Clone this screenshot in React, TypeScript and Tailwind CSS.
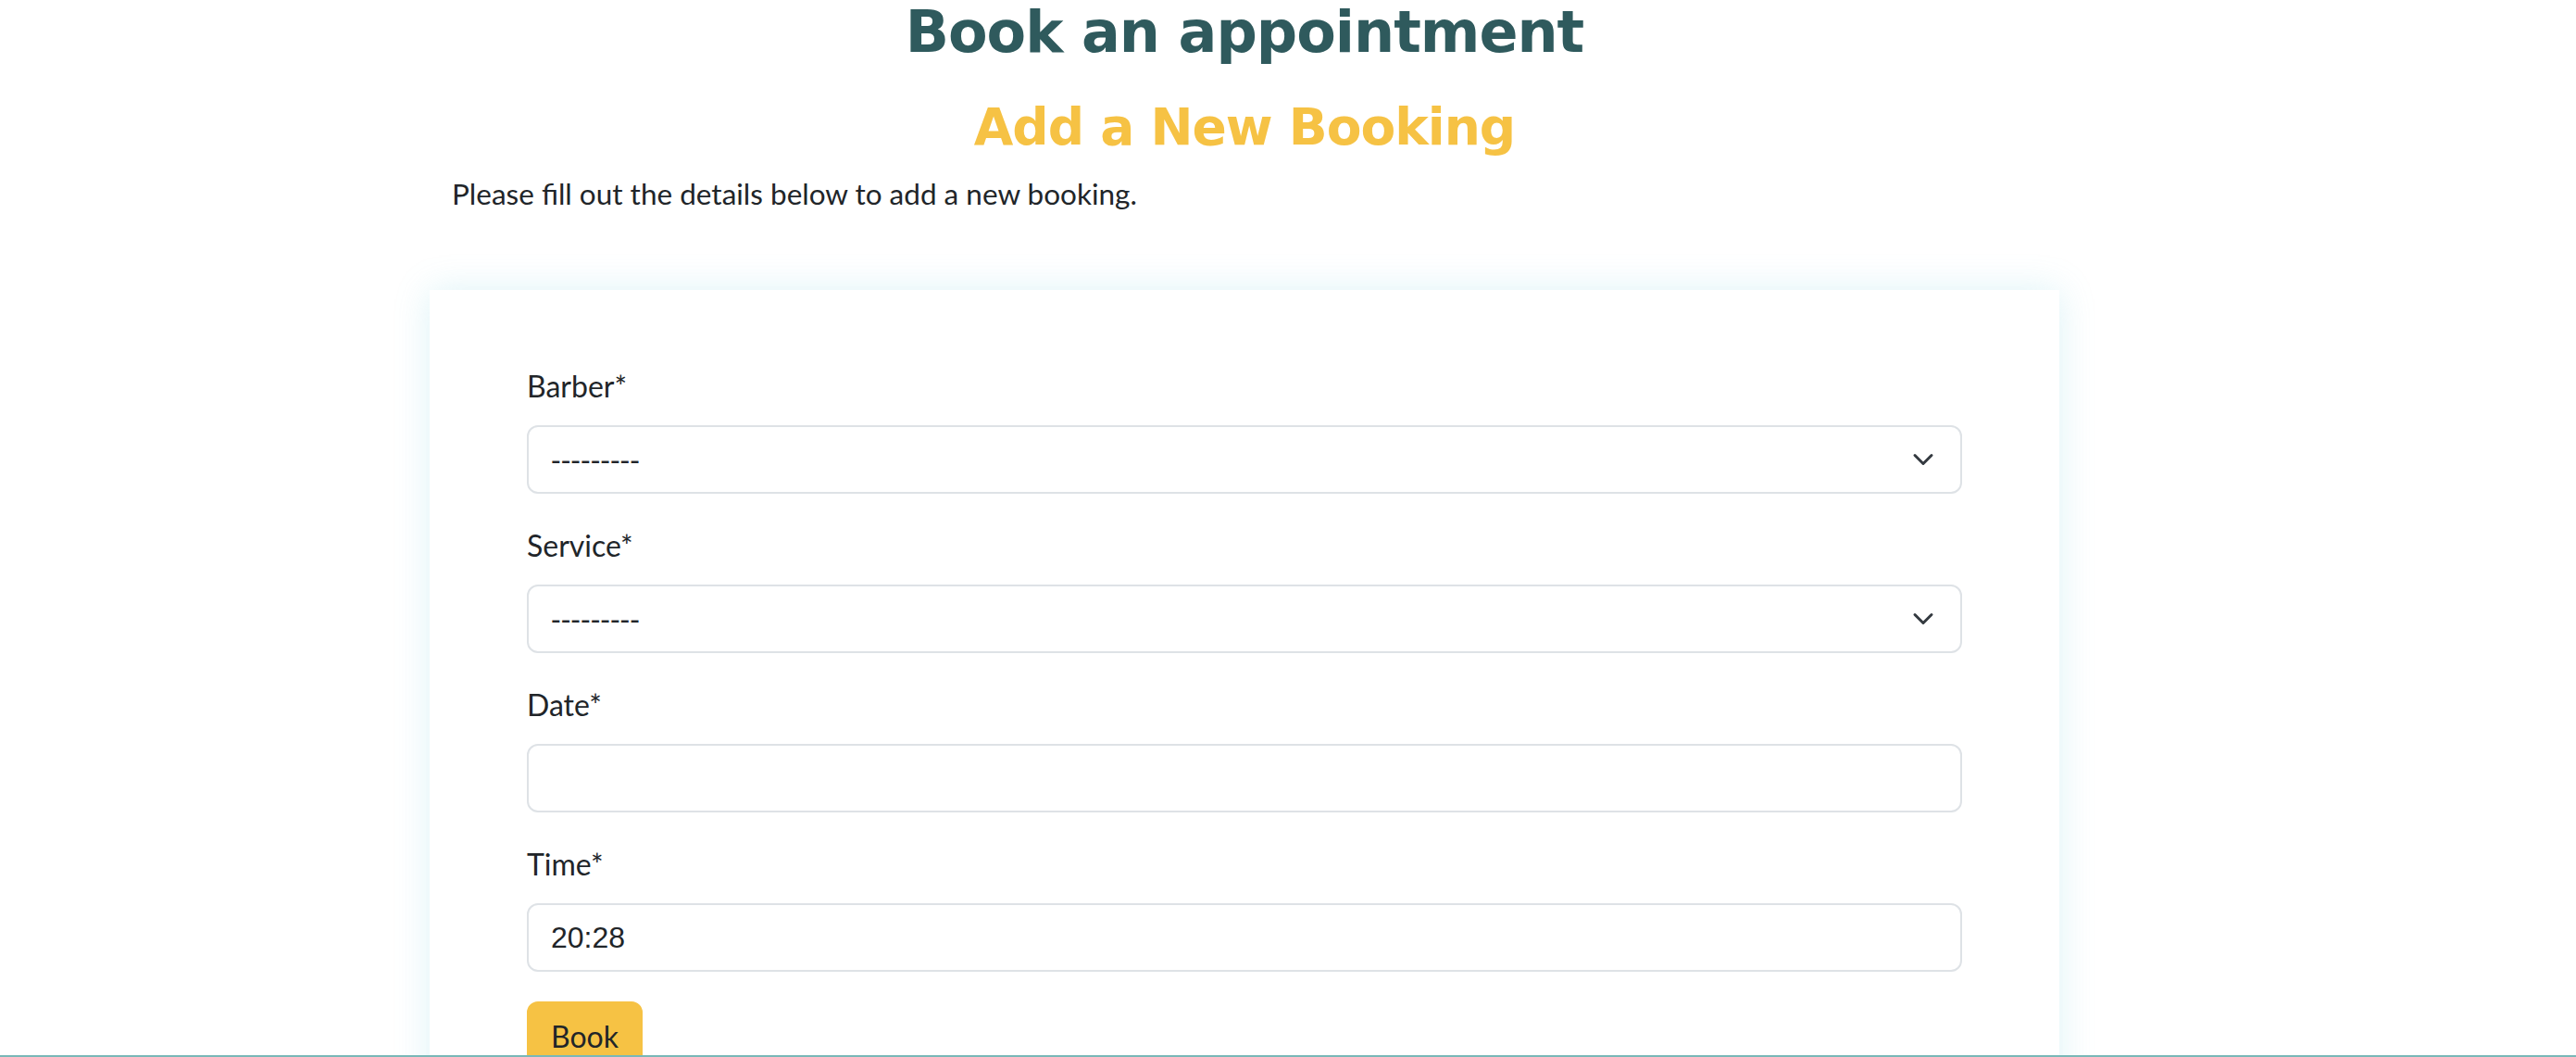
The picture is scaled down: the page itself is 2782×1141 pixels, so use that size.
import React from "react";

function Chevron() {
  return (
    <svg width="24" height="24" viewBox="0 0 16 16" fill="none" className="shrink-0">
      <path d="m2 5 6 6 6-6" stroke="#343a40" strokeWidth="2" strokeLinecap="round" strokeLinejoin="round" />
    </svg>
  );
}

function Field({ label, children }: { label: string; children: React.ReactNode }) {
  return (
    <div className="mb-[32px]">
      <div className="mb-[18px] text-[32px] leading-[48px]">{label}</div>
      {children}
    </div>
  );
}

function SelectBox() {
  return (
    <div className="flex h-[74px] w-full items-center justify-between rounded-[12px] border-2 border-[#dee2e6] bg-white pl-[24px] pr-[28px]">
      <span className="font-['Liberation_Sans',sans-serif] text-[32px] leading-[48px]">---------</span>
      <Chevron />
    </div>
  );
}

function InputBox({ value }: { value?: string }) {
  return (
    <div className="flex h-[74px] w-full items-center rounded-[12px] border-2 border-[#dee2e6] bg-white px-[24px]">
      <span className="font-['Liberation_Sans',sans-serif] text-[32px] leading-[48px]">{value ?? ""}</span>
    </div>
  );
}

export default function App() {
  return (
    <div className="min-h-screen bg-white font-['Lato',sans-serif] text-[#212529]">
      <div className="ml-[464px] w-[1760px] pt-[4px]">
        <h1 className="text-center font-['DejaVu_Sans',sans-serif] text-[62px] font-bold leading-[62px] tracking-[-1px] text-[#2f5a5d]">
          Book an appointment
        </h1>
        <h2 className="mt-[44px] text-center font-['DejaVu_Sans',sans-serif] text-[55px] font-bold leading-[55px] tracking-[-1px] text-[#f6c244]">
          Add a New Booking
        </h2>
        <p className="mt-[20px] pl-[24px] text-[31.5px] leading-[48px]">
          Please fill out the details below to add a new booking.
        </p>
        <div className="mt-[80px] bg-white px-[105px] pb-[80px] pt-[80px] shadow-[0_0_36px_rgba(100,200,220,0.22)]">
          <Field label="Barber*">
            <SelectBox />
          </Field>
          <Field label="Service*">
            <SelectBox />
          </Field>
          <Field label="Date*">
            <InputBox />
          </Field>
          <Field label="Time*">
            <InputBox value="20:28" />
          </Field>
          <button className="rounded-[12px] border-2 border-[#f6c244] bg-[#f6c244] px-[24px] py-[12px] text-[32px] leading-[48px] text-[#212529]">
            Book
          </button>
        </div>
      </div>
      <div className="fixed bottom-0 left-0 right-0 h-[2px] bg-[#7ab8b8]" />
    </div>
  );
}
